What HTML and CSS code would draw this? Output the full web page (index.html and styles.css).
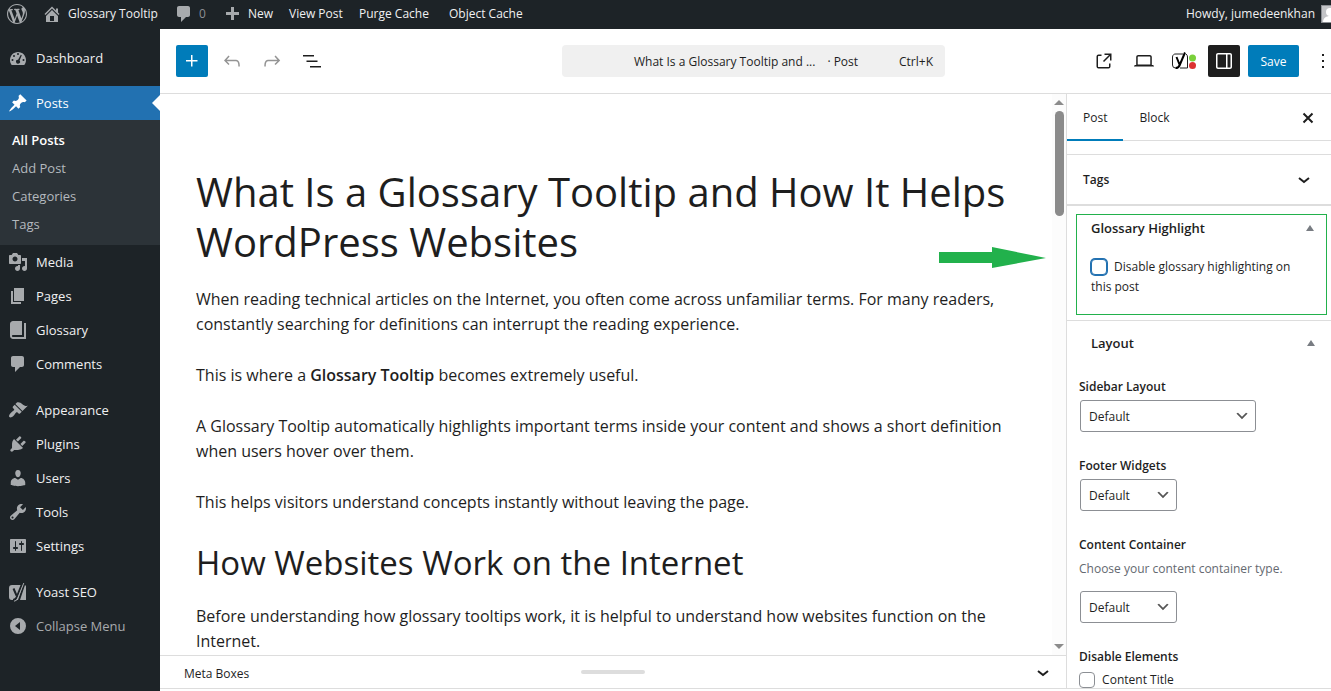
FILE: index.html
```html
<!DOCTYPE html>
<html lang="en">
<head>
    <meta charset="UTF-8">
    <meta name="viewport" content="width=device-width, initial-scale=1.0">
    <title>Edit Post - Glossary Tooltip</title>
    <link rel="stylesheet" href="styles.css">
</head>
<body>
    <header class="adminbar">
        <a href="#" class="bar-logo" aria-label="About WordPress">
            <svg width="20" height="20" viewBox="0 0 20 20"><path d="M20 10c0-5.51-4.49-10-10-10C4.48 0 0 4.49 0 10c0 5.52 4.48 10 10 10 5.51 0 10-4.48 10-10zM7.78 15.37L4.37 6.22c.55-.02 1.17-.08 1.17-.08.5-.06.44-1.13-.06-1.11 0 0-1.45.11-2.37.11-.18 0-.37 0-.58-.01C4.12 2.69 6.87 1.11 10 1.11c2.33 0 4.45.87 6.05 2.34-.68-.11-1.65.39-1.65 1.58 0 .74.45 1.36.9 2.1.35.61.55 1.36.55 2.46 0 1.49-1.4 5-1.4 5l-3.03-8.37c.54-.02.82-.17.82-.17.5-.05.44-1.25-.06-1.22 0 0-1.44.12-2.38.12-.87 0-2.33-.12-2.33-.12-.5-.03-.56 1.2-.06 1.22l.92.08 1.26 3.41zM17.41 10c.24-.64.74-1.87.43-4.25.7 1.29 1.05 2.71 1.05 4.25 0 3.29-1.73 6.24-4.4 7.78.97-2.59 1.94-5.2 2.92-7.78zM6.1 18.09C3.12 16.65 1.11 13.53 1.11 10c0-1.3.23-2.48.72-3.59C3.25 10.3 4.67 14.2 6.1 18.09zm4.03-6.63l2.58 6.98c-.86.29-1.76.45-2.71.45-.79 0-1.57-.11-2.29-.33.81-2.38 1.62-4.74 2.42-7.1z"/></svg>
        </a>
        <a href="#" class="bar-site">
            <svg width="20" height="20" viewBox="0 0 20 20"><path d="M16 8.5l1.53 1.53-1.06 1.06L10 4.6l-6.47 6.49-1.06-1.06L10 2.5l4 4v-2h2v4zm-6-2.46l6 5.99V18H4v-5.97zM12 17v-5H8v5h4z"/></svg>
            Glossary Tooltip
        </a>
        <a href="#" class="bar-comments">
            <svg width="20" height="20" viewBox="0 0 20 20"><path d="M5 2h9c1.1 0 2 .9 2 2v7c0 1.1-.9 2-2 2h-2l-5 5v-5H5c-1.1 0-2-.9-2-2V4c0-1.1.9-2 2-2z"/></svg>
            <span>0</span>
        </a>
        <a href="#" class="bar-new">
            <svg width="20" height="20" viewBox="0 0 20 20"><path d="M17 8v3h-5v5H9v-5H4V8h5V3h3v5h5z"/></svg>
            New
        </a>
        <a href="#" class="bar-view">View Post</a>
        <a href="#" class="bar-purge">Purge Cache</a>
        <a href="#">Object Cache</a>
        <a href="#" class="bar-user">
            Howdy, jumedeenkhan
            <svg class="avatar" width="18" height="18" viewBox="0 0 18 18"><rect width="18" height="18" fill="#8c8f94"/><rect x="1" y="1" width="16" height="16" fill="#c3c4c7"/><circle cx="9" cy="7" r="4" fill="#fff"/><path d="M2 17c0-8 14-8 14 0z" fill="#fff"/></svg>
        </a>
    </header>

    <div class="wrap">
        <nav class="menu">
            <a href="#" class="item">
                <svg width="20" height="20" viewBox="0 0 20 20"><path fill-rule="evenodd" d="M3.76 17h12.48c1.1-1.37 1.76-3.11 1.76-5 0-4.42-3.58-8-8-8s-8 3.58-8 8c0 1.89.66 3.63 1.76 5zM9 6a1 1 0 1 1 2 0 1 1 0 0 1-2 0zM5 8a1 1 0 1 1 2 0 1 1 0 0 1-2 0zM3.5 12a1 1 0 1 1 2 0 1 1 0 0 1-2 0zM14.5 12a1 1 0 1 1 2 0 1 1 0 0 1-2 0zM13.8 7.2L11.6 12.5a2 2 0 1 1-1.5-.8l2.7-5z"/></svg>
                Dashboard
            </a>
            <a href="#" class="item current">
                <svg width="20" height="20" viewBox="0 0 20 20"><path d="M10.44 3.02l1.82-1.82 6.36 6.35-1.83 1.82c-1.05-.68-2.48-.57-3.41.36l-.75.75c-.92.93-1.04 2.35-.35 3.41l-1.83 1.82-2.41-2.41-2.8 2.79c-.42.42-3.38 2.71-3.8 2.29s1.86-3.39 2.28-3.81l2.79-2.79L4.1 9.36l1.83-1.82c1.05.69 2.48.57 3.4-.36l.75-.75c.93-.92 1.05-2.35.36-3.41z"/></svg>
                Posts
            </a>
            <div class="submenu">
                <a href="#" class="active">All Posts</a>
                <a href="#">Add Post</a>
                <a href="#">Categories</a>
                <a href="#">Tags</a>
            </div>
            <a href="#" class="item">
                <svg width="20" height="20" viewBox="0 0 20 20"><path d="M13 11V4c0-.55-.45-1-1-1h-1.67L9 1H5L3.67 3H2c-.55 0-1 .45-1 1v7c0 .55.45 1 1 1h10c.55 0 1-.45 1-1zM7 4.5c1.38 0 2.5 1.12 2.5 2.5S8.38 9.5 7 9.5 4.5 8.38 4.5 7 5.62 4.5 7 4.5zM14 6h5v10.5c0 1.38-1.12 2.5-2.5 2.5S14 17.88 14 16.5s1.12-2.5 2.5-2.5c.17 0 .34.02.5.05V9h-3V6zm-4 8.05V13h2v3.5c0 1.38-1.12 2.5-2.5 2.5S7 17.88 7 16.5 8.12 14 9.5 14c.17 0 .34.02.5.05z"/></svg>
                Media
            </a>
            <a href="#" class="item">
                <svg width="20" height="20" viewBox="0 0 20 20"><path d="M6 15V2h10v13H6zm-1 1h8v2H3V5h2v11z"/></svg>
                Pages
            </a>
            <a href="#" class="item">
                <svg width="20" height="20" viewBox="0 0 20 20"><path d="M16 3h2v16H5c-1.66 0-3-1.34-3-3V4c0-1.66 1.34-3 3-3h9v14H5c-.55 0-1 .45-1 1s.45 1 1 1h11V3z"/></svg>
                Glossary
            </a>
            <a href="#" class="item">
                <svg width="20" height="20" viewBox="0 0 20 20"><path d="M5 2h9c1.1 0 2 .9 2 2v7c0 1.1-.9 2-2 2h-2l-5 5v-5H5c-1.1 0-2-.9-2-2V4c0-1.1.9-2 2-2z"/></svg>
                Comments
            </a>
            <div class="separator"></div>
            <a href="#" class="item">
                <svg width="20" height="20" viewBox="0 0 20 20"><path d="M14.48 11.06L7.41 3.99l1.5-1.5c.5-.56 2.3-.47 3.51.32 1.21.8 1.43 1.28 2.91 2.1 1.18.64 2.45 1.26 4.45.85zm-.71.71L6.7 4.7 4.93 6.47c-.39.39-.39 1.02 0 1.41l1.06 1.06c.39.39.39 1.03 0 1.42-.6.6-1.43 1.11-2.21 1.69-.35.26-.7.53-1.01.84C1.43 14.23.4 16.08 1.4 17.07c.99 1 2.84-.03 4.18-1.36.31-.31.58-.66.85-1.02.57-.78 1.08-1.61 1.69-2.21.39-.39 1.02-.39 1.41 0l1.06 1.06c.39.39 1.02.39 1.41 0z"/></svg>
                Appearance
            </a>
            <a href="#" class="item">
                <svg width="20" height="20" viewBox="0 0 20 20"><path d="M13.11 4.36L9.87 7.6 8 5.73l3.24-3.24c.35-.34 1.05-.2 1.56.32.52.51.66 1.21.31 1.55zm-8 1.77l.91-1.12 9.01 9.01-1.19.84c-.71.71-2.63 1.16-3.82 1.16H6.14L4.9 17.26c-.59.59-1.54.59-2.12 0-.59-.58-.59-1.53 0-2.12l1.24-1.24v-3.88c0-1.13.4-3.19 1.09-3.89zm7.26 3.97l3.24-3.24c.34-.35 1.04-.21 1.55.31.52.51.66 1.21.31 1.55l-3.24 3.25z"/></svg>
                Plugins
            </a>
            <a href="#" class="item">
                <svg width="20" height="20" viewBox="0 0 20 20"><path d="M10 9.25c-2.27 0-2.73-3.44-2.73-3.44C7 4.02 7.82 2 9.97 2c2.16 0 2.98 2.02 2.71 3.81 0 0-.41 3.44-2.68 3.44zm0 2.57L12.72 10c2.39 0 4.52 2.33 4.52 4.53v2.49s-3.65 1.13-7.24 1.13c-3.65 0-7.24-1.13-7.24-1.13v-2.49c0-2.25 1.94-4.48 4.47-4.48z"/></svg>
                Users
            </a>
            <a href="#" class="item">
                <svg width="20" height="20" viewBox="0 0 20 20"><path d="M16.68 9.77c-1.34 1.34-3.3 1.67-4.95.99l-5.41 6.52c-.99.99-2.59.99-3.58 0s-.99-2.59 0-3.57l6.52-5.42c-.68-1.65-.35-3.61.99-4.95 1.28-1.28 3.12-1.62 4.72-1.06l-2.89 2.89 2.82 2.82 2.86-2.87c.53 1.58.18 3.39-1.08 4.65zM3.81 16.21c.4.39 1.04.39 1.43 0 .4-.4.4-1.04 0-1.43-.39-.4-1.03-.4-1.43 0-.39.39-.39 1.03 0 1.43z"/></svg>
                Tools
            </a>
            <a href="#" class="item">
                <svg width="20" height="20" viewBox="0 0 20 20"><path d="M18 16V4c0-.55-.45-1-1-1H3c-.55 0-1 .45-1 1v12c0 .55.45 1 1 1h14c.55 0 1-.45 1-1zM8 11h1c.55 0 1 .45 1 1s-.45 1-1 1H8v1.5c0 .28-.22.5-.5.5s-.5-.22-.5-.5V13H6c-.55 0-1-.45-1-1s.45-1 1-1h1V5.5c0-.28.22-.5.5-.5s.5.22.5.5V11zm5-2h-1c-.55 0-1-.45-1-1s.45-1 1-1h1V5.5c0-.28.22-.5.5-.5s.5.22.5.5V7h1c.55 0 1 .45 1 1s-.45 1-1 1h-1v5.5c0 .28-.22.5-.5.5s-.5-.22-.5-.5V9z"/></svg>
                Settings
            </a>
            <div class="separator"></div>
            <a href="#" class="item">
                <svg width="20" height="20" viewBox="0 0 20 20"><path d="M4 3h11l-5 15H4a3 3 0 0 1-3-3V6a3 3 0 0 1 3-3zM17 3l1 1v14h-6z"/><path d="M5.5 6.5l3 7M14.5 1L9 14.5Q8 18 5 18" fill="none" stroke="#1d2327" stroke-width="2"/><path d="M15.8 1L10 15.5Q9 19.2 6 19.2" fill="none" stroke="#a7aaad" stroke-width="1"/></svg>
                Yoast SEO
            </a>
            <button type="button" class="item collapse">
                <svg width="20" height="20" viewBox="0 0 20 20"><path fill-rule="evenodd" d="M10 2a8 8 0 1 0 0 16 8 8 0 0 0 0-16zM12 6v8l-5-4z"/></svg>
                Collapse Menu
            </button>
        </nav>

        <div class="editor">
            <div class="toolbar">
                <div class="tools">
                    <button type="button" class="tool primary" aria-label="Block Inserter">
                        <svg width="24" height="24" viewBox="0 0 24 24"><path d="M11 12.5V17.5H12.5V12.5H17.5V11H12.5V6H11V11H6V12.5H11Z"/></svg>
                    </button>
                    <button type="button" class="tool muted" aria-label="Undo">
                        <svg width="24" height="24" viewBox="0 0 24 24"><path d="M18.3 11.7c-.6-.6-1.4-.9-2.3-.9H6.7l2.9-3.3-1.1-1-4.5 5L8.5 16l1-1-2.7-2.7H16c.5 0 .9.2 1.3.5 1 1 1 3.4 1 4.5v.3h1.5v-.2c0-1.5 0-4.3-1.5-5.7z"/></svg>
                    </button>
                    <button type="button" class="tool muted" aria-label="Redo">
                        <svg width="24" height="24" viewBox="0 0 24 24"><path d="M15.6 6.5l-1.1 1 2.9 3.3H8c-.9 0-1.7.3-2.3.9-1.4 1.5-1.4 4.2-1.4 5.6v.2h1.5v-.3c0-1.1 0-3.5 1-4.5.3-.3.7-.5 1.3-.5h9.2L14.5 15l1.1 1.1 4.6-4.6-4.6-5z"/></svg>
                    </button>
                    <button type="button" class="tool" aria-label="Document Overview">
                        <svg width="24" height="24" viewBox="0 0 24 24"><path d="M3 6h11v1.5H3V6Zm3.5 5.5h11V13h-11v-1.5ZM21 17H10v1.5h11V17Z"/></svg>
                    </button>
                </div>
                <button type="button" class="document">
                    <span class="document-title">What Is a Glossary Tooltip and ...</span>
                    <span class="document-type">· Post</span>
                    <span class="document-key">Ctrl+K</span>
                </button>
                <div class="actions">
                    <a href="#" class="tool" aria-label="View Post">
                        <svg width="24" height="24" viewBox="0 0 24 24"><path d="M19.5 4.5h-7V6h4.44l-5.97 5.97 1.06 1.06L18 7.06v4.44h1.5v-7Zm-13 1a2 2 0 0 0-2 2v10a2 2 0 0 0 2 2h10a2 2 0 0 0 2-2v-3H17v3a.5.5 0 0 1-.5.5h-10a.5.5 0 0 1-.5-.5v-10a.5.5 0 0 1 .5-.5h3V5.5h-3Z"/></svg>
                    </a>
                    <button type="button" class="tool" aria-label="Preview">
                        <svg width="24" height="24" viewBox="0 0 24 24"><path d="M20.5 16h-.7V8c0-1.1-.9-2-2-2H6.2c-1.1 0-2 .9-2 2v8h-.7c-.8 0-1.5.7-1.5 1.5h20c0-.8-.7-1.5-1.5-1.5zM5.7 8c0-.3.2-.5.5-.5h11.6c.3 0 .5.2.5.5v7.6H5.7V8z"/></svg>
                    </button>
                    <button type="button" class="tool" aria-label="Yoast SEO">
                        <svg width="26" height="24" viewBox="0 0 26 24"><path d="M12 5H5a3 3 0 0 0-3.500 3v8a3 3 0 0 0 3 3M9 19h7.500V8q0-2-1.500-3" fill="none" stroke="#1e1e1e" stroke-width="1"/><path d="M5.5 8l3 7.500M14 3.500L8.500 16.500Q7.500 19 4.500 19" fill="none" stroke="#000" stroke-width="2"/><circle cx="21.500" cy="9" r="3.500" fill="#7ad03a"/><circle cx="21.500" cy="16.500" r="3.500" fill="#dc3232"/></svg>
                    </button>
                    <button type="button" class="tool pressed" aria-label="Settings">
                        <svg width="24" height="24" viewBox="0 0 24 24"><path fill-rule="evenodd" d="M18 4H6c-1.1 0-2 .9-2 2v12c0 1.1.9 2 2 2h12c1.1 0 2-.9 2-2V6c0-1.1-.9-2-2-2zm-4 14.5H6c-.3 0-.5-.2-.5-.5V6c0-.3.2-.5.5-.5h8v13zm4.5-.5c0 .3-.2.5-.5.5h-2.5v-13H18c.3 0 .5.2.5.5v12z"/></svg>
                    </button>
                    <button type="button" class="save">Save</button>
                    <button type="button" class="tool" aria-label="Options">
                        <svg width="24" height="24" viewBox="0 0 24 24"><path d="M13 19h-2v-2h2v2zm0-6h-2v-2h2v2zm0-6h-2V5h2v2z"/></svg>
                    </button>
                </div>
            </div>

            <div class="editor-body">
                <div class="main">
                    <div class="canvas">
                        <article class="post">
                            <h1>What Is a Glossary Tooltip and How It Helps WordPress Websites</h1>
                            <p>When reading technical articles on the Internet, you often come across unfamiliar terms. For many readers, constantly searching for definitions can interrupt the reading experience.</p>
                            <p>This is where a <strong>Glossary Tooltip</strong> becomes extremely useful.</p>
                            <p>A Glossary Tooltip automatically highlights important terms inside your content and shows a short definition when users hover over them.</p>
                            <p>This helps visitors understand concepts instantly without leaving the page.</p>
                            <h2>How Websites Work on the Internet</h2>
                            <p>Before understanding how glossary tooltips work, it is helpful to understand how websites function on the Internet.</p>
                        </article>
                        <div class="scrollbar">
                            <span class="arrow-up"></span>
                            <span class="thumb"></span>
                            <span class="arrow-down"></span>
                        </div>
                        <svg class="pointer" width="107" height="22" viewBox="0 0 107 22"><path d="M0 5h53V0l54 11-54 10v-5H0z" fill="#22b14c"/></svg>
                    </div>
                    <div class="metaboxes">
                        <span class="metaboxes-title">Meta Boxes</span>
                        <span class="handle"></span>
                        <svg width="24" height="24" viewBox="0 0 24 24"><path d="M7 11l5 4 5-4" fill="none" stroke="#1e1e1e" stroke-width="2"/></svg>
                    </div>
                </div>

                <aside class="sidebar">
                    <div class="tabs">
                        <button type="button" class="tab selected">Post</button>
                        <button type="button" class="tab">Block</button>
                        <button type="button" class="close" aria-label="Close Settings">
                            <svg width="24" height="24" viewBox="0 0 24 24"><path d="M7.5 7.5l9 9M16.5 7.5l-9 9" fill="none" stroke="#1e1e1e" stroke-width="2"/></svg>
                        </button>
                    </div>
                    <button type="button" class="panel-toggle">
                        Tags
                        <svg width="24" height="24" viewBox="0 0 24 24"><path d="M7 10l5 4 5-4" fill="none" stroke="#1e1e1e" stroke-width="2"/></svg>
                    </button>
                    <section class="box glossary">
                        <h3>Glossary Highlight <span class="toggle"></span></h3>
                        <label><input type="checkbox" class="focused"> Disable glossary highlighting on this post</label>
                    </section>
                    <section class="box layout">
                        <h3>Layout <span class="toggle"></span></h3>
                        <div class="field">
                            <label for="sidebar-layout">Sidebar Layout</label>
                            <select id="sidebar-layout" class="wide"><option>Default</option></select>
                        </div>
                        <div class="field">
                            <label for="footer-widgets">Footer Widgets</label>
                            <select id="footer-widgets"><option>Default</option></select>
                        </div>
                        <div class="field">
                            <label for="content-container">Content Container</label>
                            <p>Choose your content container type.</p>
                            <select id="content-container"><option>Default</option></select>
                        </div>
                        <div class="field">
                            <strong>Disable Elements</strong>
                            <label class="check"><input type="checkbox"> Content Title</label>
                        </div>
                    </section>
                </aside>
            </div>
        </div>
    </div>
</body>
</html>
```
FILE: styles.css
```css
* {
    box-sizing: border-box;
}

body {
    margin: 0;
    height: 100vh;
    display: flex;
    flex-direction: column;
    overflow: hidden;
    font-family: 'Open Sans', 'Noto Sans', sans-serif;
    font-size: 12px;
    color: #1e1e1e;
    background: #fff;
}

a {
    color: inherit;
    text-decoration: none;
}

button, select, input {
    font-family: inherit;
    font-size: inherit;
    color: inherit;
    margin: 0;
}

button {
    border: none;
    background: none;
    padding: 0;
    cursor: pointer;
}

svg {
    display: block;
    flex-shrink: 0;
    fill: currentColor;
}

/* admin bar */
.adminbar {
    height: 29px;
    flex-shrink: 0;
    display: flex;
    align-items: center;
    padding: 0 0 2px 7px;
    background: #1d2327;
    color: #f0f0f1;
    white-space: nowrap;
}

.adminbar a {
    display: flex;
    align-items: center;
}

.adminbar svg {
    color: #a7aaad;
}

.bar-site {
    width: 132px;
    margin-left: 15px;
    gap: 6px;
}

.bar-comments {
    width: 34px;
    gap: 5px;
}

.bar-comments span {
    color: #8c8f94;
}

.bar-new {
    width: 67px;
    margin-left: 14px;
    gap: 6px;
}

.bar-view {
    width: 70px;
}

.bar-purge {
    width: 90px;
}

.bar-user {
    margin-left: auto;
    margin-right: -8px;
    gap: 6px;
}

.wrap {
    flex: 1;
    min-height: 0;
    display: flex;
}

/* left menu */
.menu {
    width: 160px;
    flex-shrink: 0;
    padding-top: 12px;
    background: #1d2327;
    color: #f0f0f1;
    font-size: 13px;
}

.item {
    position: relative;
    display: flex;
    align-items: center;
    width: 100%;
    height: 34px;
    padding-left: 8px;
    gap: 8px;
}

.item svg {
    color: #a7aaad;
}

.item.current {
    margin-top: 11px;
    background: #2271b1;
    color: #fff;
}

.item.current svg {
    color: #fff;
}

.item.current::after {
    content: "";
    position: absolute;
    right: 0;
    top: 9px;
    border: 8px solid transparent;
    border-left: 0;
    border-right-color: #fff;
}

.submenu {
    padding: 6px 0 7px;
    background: #2c3338;
}

.submenu a {
    display: block;
    padding-left: 12px;
    line-height: 28px;
    color: #b4b9be;
}

.submenu .active {
    color: #fff;
    font-weight: 600;
}

.separator {
    height: 12px;
}

.collapse {
    color: #a7aaad;
}

/* editor */
.editor {
    flex: 1;
    min-width: 0;
    display: flex;
    flex-direction: column;
    margin-bottom: 2px;
    border-bottom: 1px solid #ddd;
}

.toolbar {
    height: 65px;
    flex-shrink: 0;
    display: grid;
    grid-template-columns: 1fr 383px 1fr;
    align-items: center;
    padding-left: 16px;
    border-bottom: 1px solid #ddd;
}

.tools, .actions {
    display: flex;
    gap: 8px;
}

.actions {
    justify-content: flex-end;
    margin-right: -8px;
}

.tool {
    width: 32px;
    height: 32px;
    display: flex;
    align-items: center;
    justify-content: center;
    border-radius: 2px;
}

.primary {
    background: #007cba;
    color: #fff;
}

.muted {
    color: #949494;
}

.pressed {
    background: #1e1e1e;
    color: #fff;
}

.save {
    width: 51px;
    height: 32px;
    border-radius: 2px;
    background: #007cba;
    color: #fff;
}

.document {
    height: 32px;
    display: flex;
    align-items: center;
    padding: 0 12px 0 72px;
    border-radius: 4px;
    background: #f0f0f0;
}

.document-type {
    margin-left: 12px;
}

.document-key {
    margin-left: auto;
}

.editor-body {
    flex: 1;
    min-height: 0;
    display: flex;
}

.main {
    flex: 1;
    min-width: 0;
    display: flex;
    flex-direction: column;
}

.canvas {
    position: relative;
    flex: 1;
    min-height: 0;
    display: flex;
    overflow: hidden;
}

.post {
    flex: 1;
    padding: 73px 36px 0;
    font-size: 16px;
    line-height: 25px;
}

.post h1 {
    margin: 0 0 20px;
    font-size: 40px;
    font-weight: 400;
    line-height: 50px;
}

.post h2 {
    margin: 0 0 19px;
    font-size: 33px;
    font-weight: 400;
    line-height: 44px;
}

.post p {
    margin: 0 0 26px;
}

.post strong {
    font-weight: 600;
}

.scrollbar {
    width: 14px;
    display: flex;
    flex-direction: column;
    align-items: center;
    padding: 6px 0;
    background: #fcfcfc;
}

.arrow-up, .arrow-down {
    border: 5px solid transparent;
}

.arrow-up {
    border-top: 0;
    border-bottom-color: #8b8b8b;
}

.arrow-down {
    margin-top: auto;
    border-bottom: 0;
    border-top-color: #8b8b8b;
}

.thumb {
    width: 9px;
    height: 105px;
    margin-top: 6px;
    border-radius: 5px;
    background: #8b8b8b;
}

.pointer {
    position: absolute;
    right: 20px;
    top: 153px;
}

.metaboxes {
    height: 33px;
    display: grid;
    grid-template-columns: 1fr auto 1fr;
    align-items: center;
    border-top: 1px solid #ddd;
}

.metaboxes-title {
    padding: 2px 0 0 24px;
}

.metaboxes svg {
    justify-self: end;
    margin-right: 11px;
}

.handle {
    width: 64px;
    height: 4px;
    border-radius: 2px;
    background: #ddd;
}

/* settings sidebar */
.sidebar {
    width: 265px;
    border-left: 1px solid #ddd;
    overflow: hidden;
}

.tabs {
    height: 47px;
    display: flex;
    margin-bottom: 13px;
    border-bottom: 1px solid #ddd;
}

.tab {
    height: 47px;
    padding: 0 16px;
    border-bottom: 2px solid transparent;
}

.tab.selected {
    border-bottom-color: #007cba;
}

.tab, .close {
    padding-top: 2px;
}

.close {
    margin: 0 11px 0 auto;
}

.panel-toggle {
    width: 100%;
    height: 52px;
    display: flex;
    align-items: center;
    justify-content: space-between;
    padding: 0 15px 0 16px;
    border-top: 1px solid #ddd;
    border-bottom: 2px solid #ddd;
    font-weight: 600;
}

.box h3 {
    display: flex;
    align-items: center;
    justify-content: space-between;
    margin: 0;
    font-size: 13px;
    font-weight: 600;
    line-height: 20px;
}

.toggle {
    border: 4px solid transparent;
    border-top: 0;
    border-bottom: 6px solid #787c82;
}

.glossary {
    height: 101px;
    margin: 8px 4px 5px 9px;
    padding: 3px 12px 0 14px;
    border: 1px solid #22b14c;
}

.glossary label {
    display: block;
    margin-top: 19px;
    padding-right: 12px;
    line-height: 20px;
}

input[type="checkbox"] {
    appearance: none;
    width: 16px;
    height: 16px;
    margin-right: 4px;
    border: 1px solid #8c8f94;
    border-radius: 4px;
    background: #fff;
    vertical-align: -4px;
}

input.focused {
    border-color: #2271b1;
    box-shadow: 0 0 0 1px #2271b1;
}

.layout {
    padding: 12px 16px 0 12px;
    border-top: 1px solid #ddd;
}

.layout h3 {
    padding-left: 12px;
    margin-bottom: 24px;
}

.field {
    display: flex;
    flex-direction: column;
    align-items: flex-start;
    margin-bottom: 24px;
    line-height: 20px;
}

.field label, .field strong {
    font-weight: 600;
}

.field p {
    margin: 4px 0 9px;
    color: #646970;
}

select {
    appearance: none;
    width: 97px;
    height: 32px;
    margin: 3px 0 0 1px;
    padding: 0 8px;
    border: 1px solid #8c8f94;
    border-radius: 3px;
    background: #fff url("data:image/svg+xml,%3Csvg xmlns='http://www.w3.org/2000/svg' width='20' height='20'%3E%3Cpath d='M5 6l5 5 5-5 2 1-7 7-7-7z' fill='%23555'/%3E%3C/svg%3E") no-repeat right 5px center / 16px 16px;
}

select.wide {
    width: 176px;
}

.field .check {
    margin-top: 3px;
    font-weight: 400;
}
```
